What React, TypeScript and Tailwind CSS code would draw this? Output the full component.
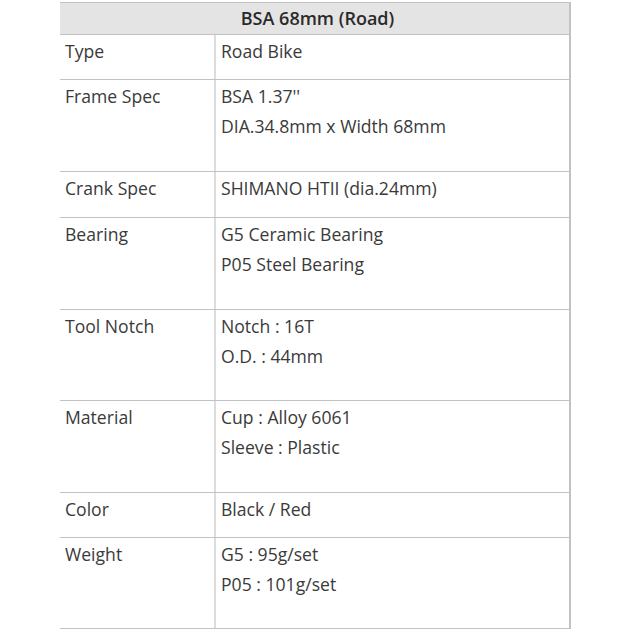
const rows: { label: string; lines: string[]; h: string }[] = [
  { label: "Type", lines: ["Road Bike"], h: "h-[45px]" },
  { label: "Frame Spec", lines: ["BSA 1.37''", "DIA.34.8mm x Width 68mm"], h: "h-[92px]" },
  { label: "Crank Spec", lines: ["SHIMANO HTII (dia.24mm)"], h: "h-[46px]" },
  { label: "Bearing", lines: ["G5 Ceramic Bearing", "P05 Steel Bearing"], h: "h-[92px]" },
  { label: "Tool Notch", lines: ["Notch : 16T", "O.D. : 44mm"], h: "h-[91px]" },
  { label: "Material", lines: ["Cup : Alloy 6061", "Sleeve : Plastic"], h: "h-[92px]" },
  { label: "Color", lines: ["Black / Red"], h: "h-[45px]" },
  { label: "Weight", lines: ["G5 : 95g/set", "P05 : 101g/set"], h: "h-[91px]" },
];

export default function App() {
  return (
    <div className="h-[631px] w-[631px] bg-white pt-[2px] pl-[60px] font-['Open_Sans',sans-serif] text-[#3a3a3a]">
      <div className="w-[511px] border-t border-r-2 border-[#c2c2c2]">
        <div className="flex h-[32px] items-center justify-center border-b border-[#c2c2c2] bg-[#e4e4e4] pl-[6px] text-[18px] font-semibold text-[#2a2a2a]">
          BSA 68mm (Road)
        </div>
        {rows.map((r) => (
          <div key={r.label} className={`flex border-b border-[#c2c2c2] ${r.h}`}>
            <div className="w-[156px] border-r-2 border-[#dcdcdc] pl-[5px] pt-[1px] text-[17.6px] leading-[30px]">
              {r.label}
            </div>
            <div className="flex-1 pl-[5px] pt-[1px] text-[17.6px] leading-[30px]">
              {r.lines.map((l) => (
                <div key={l}>{l}</div>
              ))}
            </div>
          </div>
        ))}
      </div>
    </div>
  );
}
